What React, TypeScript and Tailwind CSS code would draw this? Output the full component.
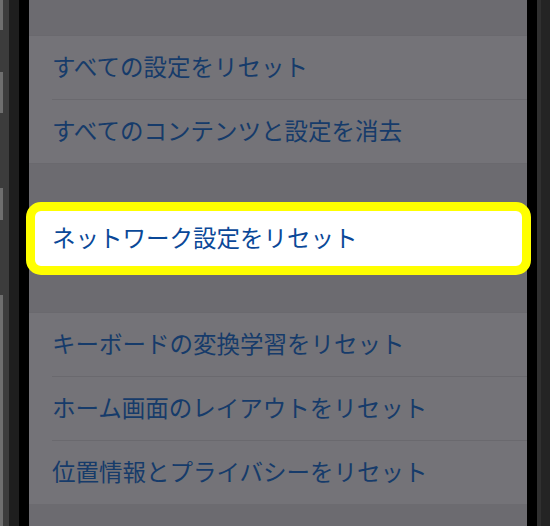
import React from "react";

const font = { fontFamily: '"Noto Sans CJK JP", "Noto Sans", sans-serif' };

function Row({ label, inset = true }: { label: string; inset?: boolean }) {
  return (
    <div className="bg-[#747378]">
      <div className={inset ? "ml-[23px] h-px bg-[#6a696e]" : "h-px bg-[#6a696e]"} />
      <div className="h-[63px] flex items-center pl-[23px] pb-[2px] text-[23.5px] text-[#163b6a]">
        {label}
      </div>
    </div>
  );
}

export default function App() {
  return (
    <div className="w-[550px] h-[526px] flex overflow-hidden bg-black" style={font}>
      {/* left bezel */}
      <div className="w-[3px] flex flex-col bg-[#3c3c3c]">
        <div className="h-[30px] bg-[#6e6e6e]" />
        <div className="h-[42px]" />
        <div className="h-[41px] bg-[#6e6e6e]" />
        <div className="h-[75px]" />
        <div className="h-[32px] bg-[#6e6e6e]" />
        <div className="h-[75px]" />
        <div className="flex-1 bg-[#6e6e6e]" />
      </div>
      <div className="w-[6px] bg-[#3c3c3c]" />
      <div className="w-[10px] bg-[#1e1e1e]" />
      <div className="w-[10px] bg-black" />

      {/* screen */}
      <div className="w-[498px] bg-[#6c6b70] flex flex-col">
        <div className="h-[35px]" />
        <Row label="すべての設定をリセット" inset={false} />
        <Row label="すべてのコンテンツと設定を消去" />
        <div className="h-px bg-[#6a696e]" />
        <div className="h-[38px]" />

        <div className="relative z-10 -ml-[3px] -mr-[4px] h-[73px] rounded-[15px] border-[9px] border-[#ffff00] bg-white flex items-center pl-[17px] pb-[2px] text-[23.5px] text-[#0a4898]">
          ネットワーク設定をリセット
        </div>

        <div className="h-[37px]" />
        <Row label="キーボードの変換学習をリセット" inset={false} />
        <Row label="ホーム画面のレイアウトをリセット" />
        <Row label="位置情報とプライバシーをリセット" />
        <div className="flex-1" />
      </div>

      {/* right bezel */}
      <div className="w-[10px] bg-black" />
      <div className="w-[4px] bg-[#303030]" />
      <div className="flex-1 bg-[#242424]" />
    </div>
  );
}
